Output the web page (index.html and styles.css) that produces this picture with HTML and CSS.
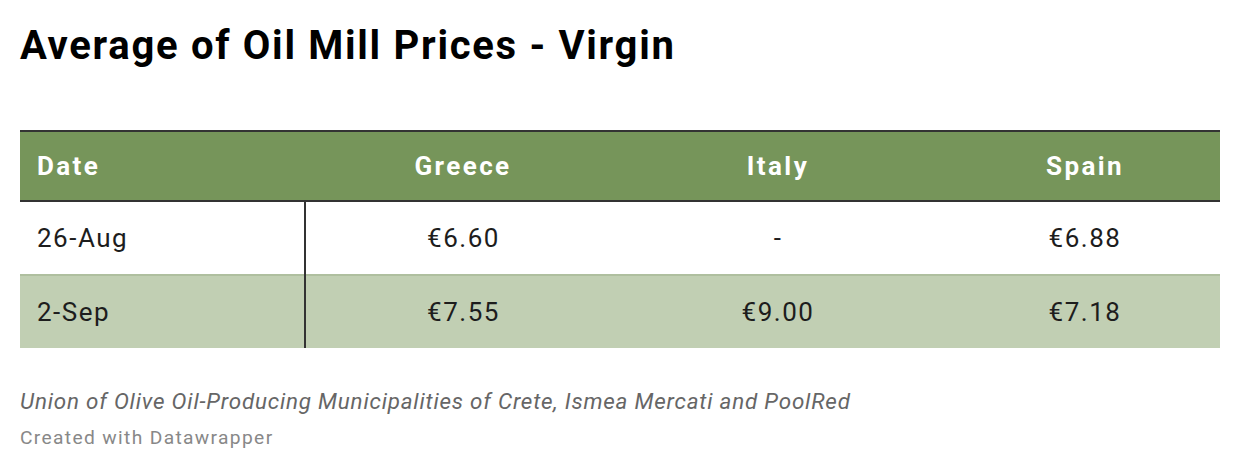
FILE: index.html
```html
<!DOCTYPE html>
<html lang="en">
<head>
<meta charset="utf-8">
<title>Average of Oil Mill Prices - Virgin</title>
<link rel="stylesheet" href="styles.css">
</head>
<body>
<div class="chart">
  <h1 class="title">Average of Oil Mill Prices - Virgin</h1>
  <table class="prices">
    <colgroup>
      <col class="c-date">
      <col class="c-greece">
      <col class="c-italy">
      <col class="c-spain">
    </colgroup>
    <thead>
      <tr>
        <th class="date">Date</th>
        <th>Greece</th>
        <th>Italy</th>
        <th class="spain">Spain</th>
      </tr>
    </thead>
    <tbody>
      <tr>
        <td class="date">26-Aug</td>
        <td>€6.60</td>
        <td>-</td>
        <td class="spain">€6.88</td>
      </tr>
      <tr class="alt">
        <td class="date">2-Sep</td>
        <td>€7.55</td>
        <td>€9.00</td>
        <td class="spain">€7.18</td>
      </tr>
    </tbody>
  </table>
  <div class="notes">
    <p class="source">Union of Olive Oil-Producing Municipalities of Crete, Ismea Mercati and PoolRed</p>
    <p class="credit">Created with Datawrapper</p>
  </div>
</div>
</body>
</html>
```

FILE: styles.css
```css
html, body {
  margin: 0;
  padding: 0;
  background: #ffffff;
}

body {
  font-family: Roboto, "Liberation Sans", sans-serif;
  color: #1d1d1d;
}

.chart {
  padding: 20px 20px 0 20px;
}

.title {
  margin: 0;
  font-size: 40px;
  font-weight: 700;
  line-height: 52px;
  color: #000000;
  letter-spacing: 1.7px;
}

.prices {
  margin-top: 58px;
  width: 1200px;
  border-collapse: collapse;
  table-layout: fixed;
}

.c-date { width: 285px; }
.c-greece { width: 316px; }
.c-italy { width: 314px; }
.c-spain { width: 285px; }

.prices thead tr {
  background: #76955a;
  border-top: 2px solid #333333;
  border-bottom: 2px solid #333333;
}

.prices th {
  height: 68px;
  padding: 0;
  font-size: 26px;
  font-weight: 700;
  color: #ffffff;
  text-align: center;
  vertical-align: middle;
  letter-spacing: 2.4px;
}

.prices td {
  height: 72px;
  padding: 0;
  font-size: 26px;
  font-weight: 400;
  text-align: center;
  vertical-align: middle;
  letter-spacing: 1.5px;
}

.prices th.date,
.prices td.date {
  text-align: left;
  padding-left: 17px;
}

.prices td.date {
  border-right: 2px solid #333333;
}

.prices .spain {
  padding-left: 15px;
}

.prices tr.alt {
  background: #c1cfb3;
  border-top: 2px solid #afbf9f;
}

.notes {
  padding-top: 38px;
}

.source {
  margin: 0;
  font-size: 22.4px;
  font-style: italic;
  color: #666666;
  line-height: 30px;
  letter-spacing: 0.8px;
}

.credit {
  margin: 9px 0 0 0;
  font-size: 19.2px;
  color: #888888;
  line-height: 26px;
  letter-spacing: 1.35px;
}
```
